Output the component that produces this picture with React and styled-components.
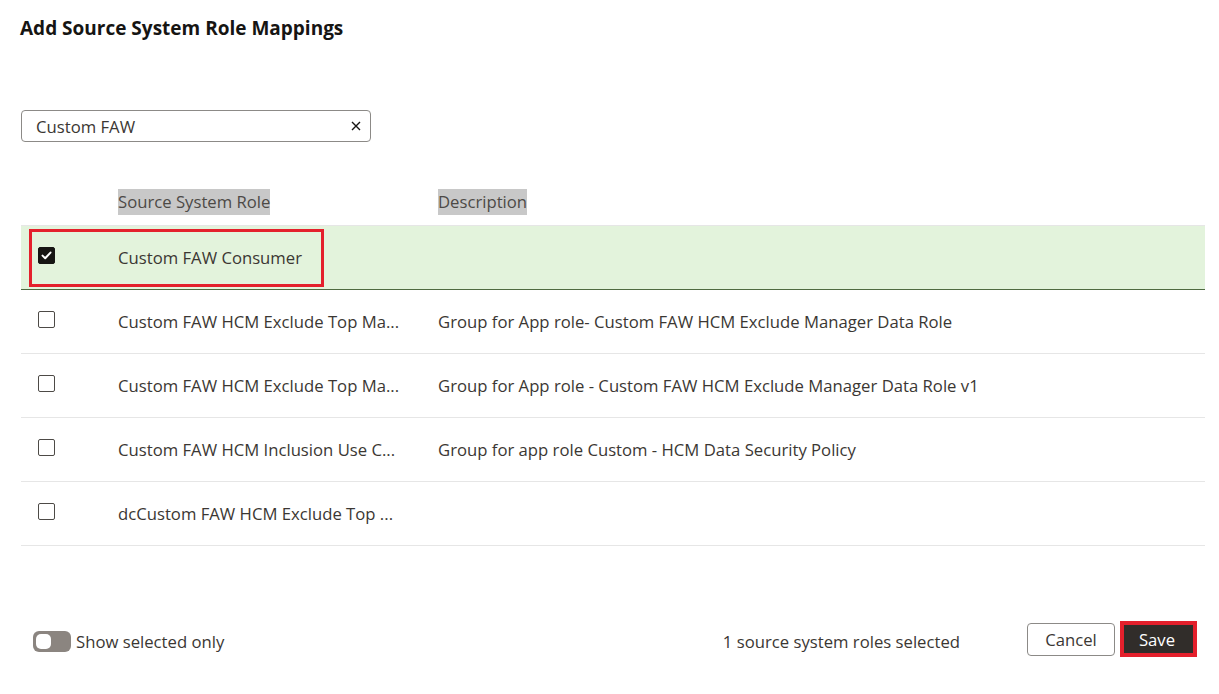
import styled, { createGlobalStyle } from 'styled-components'

const GlobalStyle = createGlobalStyle`
  body {
    margin: 0;
    background: #fff;
    font-family: "Open Sans", "Noto Sans", sans-serif;
    color: #161513;
  }
`

const roles = [
  { name: 'Custom FAW Consumer', desc: '', selected: true },
  { name: 'Custom FAW HCM Exclude Top Ma...', desc: 'Group for App role- Custom FAW HCM Exclude Manager Data Role' },
  { name: 'Custom FAW HCM Exclude Top Ma...', desc: 'Group for App role - Custom FAW HCM Exclude Manager Data Role v1' },
  { name: 'Custom FAW HCM Inclusion Use C...', desc: 'Group for app role Custom - HCM Data Security Policy' },
  { name: 'dcCustom FAW HCM Exclude Top ...', desc: '' },
]

function CheckIcon() {
  return (
    <svg width="11" height="9" viewBox="0 0 11 9">
      <path d="M1.5 4.6 L4.2 7.2 L9.5 1.6" stroke="#fff" strokeWidth="2" fill="none" strokeLinecap="round" strokeLinejoin="round" />
    </svg>
  )
}

function App() {
  return (
    <Dialog>
      <GlobalStyle />
      <Title>Add Source System Role Mappings</Title>

      <Search>
        <span>Custom FAW</span>
        <ClearIcon width="10" height="10" viewBox="0 0 10 10">
          <path d="M1 1 L9 9 M9 1 L1 9" stroke="#161513" strokeWidth="1.4" />
        </ClearIcon>
      </Search>

      <Table>
        <HeaderRow>
          <div />
          <HeadCell><Marked>Source System Role</Marked></HeadCell>
          <HeadCell><Marked>Description</Marked></HeadCell>
        </HeaderRow>
        {roles.map((r, i) => (
          <Row key={i} $selected={r.selected}>
            <CheckCell>
              <Checkbox $checked={r.selected}>{r.selected && <CheckIcon />}</Checkbox>
            </CheckCell>
            <Cell>{r.name}</Cell>
            <Cell>{r.desc}</Cell>
            {r.selected && <Highlight />}
          </Row>
        ))}
      </Table>

      <Footer>
        <ToggleLabel>
          <Toggle><Knob /></Toggle>
          Show selected only
        </ToggleLabel>
        <Count>1 source system roles selected</Count>
        <CancelButton>Cancel</CancelButton>
        <SaveFrame>
          <SaveButton>Save</SaveButton>
        </SaveFrame>
      </Footer>
    </Dialog>
  )
}

const Dialog = styled.div`
  padding: 14px 14px 0 21px;
`

const Title = styled.h1`
  margin: 0 0 0 -1px;
  font-size: 19px;
  line-height: 28px;
  font-weight: 700;
  color: #161513;
`

const Search = styled.div`
  margin-top: 68px;
  width: 350px;
  height: 32px;
  box-sizing: border-box;
  border: 1px solid #8c8a87;
  border-radius: 4px;
  display: flex;
  align-items: center;
  justify-content: space-between;
  padding: 0 9px 0 14px;
  font-size: 16.7px;
  color: #3b3733;
`

const ClearIcon = styled.svg`
  display: block;
`

const Table = styled.div`
  margin-top: 36px;
`

const grid = `
  display: grid;
  grid-template-columns: 97px 320px 1fr;
  align-items: center;
`

const HeaderRow = styled.div`
  ${grid}
  height: 47px;
  border-bottom: 1px solid #e6e6e6;
`

const HeadCell = styled.div`
  font-size: 16.7px;
  color: #4d4a46;
`

const Marked = styled.span`
  background: #c8c8c8;
  padding: 1px 0 2px;
`

const Row = styled.div`
  ${grid}
  position: relative;
  height: 63px;
  background: ${p => (p.$selected ? '#e3f3dc' : '#fff')};
  border-bottom: 1px solid ${p => (p.$selected ? '#4f6a41' : '#e6e6e6')};
`

const Cell = styled.div`
  font-size: 16.7px;
  color: #3b3733;
  white-space: nowrap;
  overflow: hidden;
`

const CheckCell = styled.div`
  display: flex;
  align-items: center;
  padding: 0 0 4px 17px;
`

const Checkbox = styled.span`
  width: 17px;
  height: 17px;
  flex: none;
  box-sizing: border-box;
  border-radius: 2px;
  border: 1px solid ${p => (p.$checked ? '#161513' : '#4d4a46')};
  background: ${p => (p.$checked ? '#161513' : '#fff')};
  display: flex;
  align-items: center;
  justify-content: center;
`

const Highlight = styled.div`
  position: absolute;
  left: 8px;
  top: 3px;
  width: 295px;
  height: 58px;
  box-sizing: border-box;
  border: 3px solid #e4202c;
`

const Footer = styled.div`
  margin-top: 75px;
  height: 36px;
  display: flex;
  align-items: center;
  padding: 0 8px 0 12px;
`

const ToggleLabel = styled.label`
  display: flex;
  align-items: center;
  gap: 5px;
  margin-top: 4px;
  font-size: 16.7px;
  color: #3b3733;
`

const Toggle = styled.span`
  width: 38px;
  height: 21px;
  box-sizing: border-box;
  border-radius: 6px;
  background: #8b8580;
  padding: 3px;
  display: flex;
`

const Knob = styled.span`
  width: 15px;
  height: 15px;
  border-radius: 5px;
  background: #fff;
`

const Count = styled.span`
  margin: 4px 67px 0 auto;
  font-size: 16.7px;
  color: #3b3733;
`

const CancelButton = styled.button`
  width: 88px;
  height: 33px;
  box-sizing: border-box;
  border: 1px solid #8c8a87;
  border-radius: 4px;
  background: #fff;
  font-family: inherit;
  font-size: 16.7px;
  color: #3b3733;
  margin-right: 5px;
`

const SaveFrame = styled.span`
  border: 4px solid #e4202c;
  display: flex;
`

const SaveButton = styled.button`
  width: 69px;
  height: 28px;
  border: 0;
  background: #312d2a;
  color: #fff;
  font-family: inherit;
  font-size: 16.7px;
  padding: 0 3px 0 0;
`

export default App
